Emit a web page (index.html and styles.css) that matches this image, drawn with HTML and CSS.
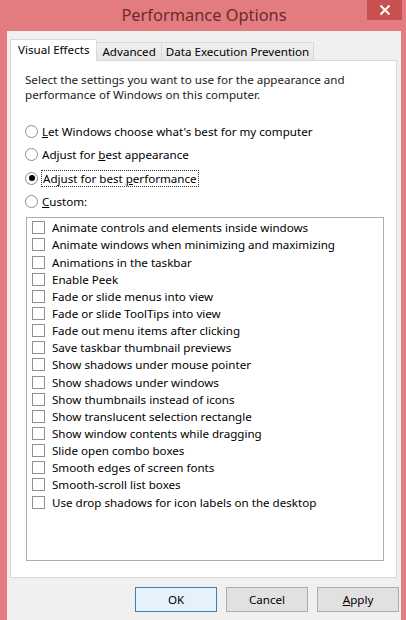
FILE: index.html
```html
<!DOCTYPE html>
<html>
<head>
<meta charset="utf-8">
<link rel="stylesheet" href="styles.css">
</head>
<body>
<div class="window">
  <div class="titlebar">
    <div></div>
    <div class="title">Performance Options</div>
    <div class="close-wrap"><div class="close"><svg width="12" height="12" viewBox="0 0 12 12"><path d="M1.5 1.5 L10.5 10.5 M10.5 1.5 L1.5 10.5" stroke="#fff" stroke-width="2" fill="none"/></svg></div></div>
  </div>
  <div class="client">
    <div class="tabs">
      <div class="tab active">Visual Effects</div>
      <div class="tab">Advanced</div>
      <div class="tab">Data Execution Prevention</div>
    </div>
    <div class="panel">
      <p class="desc">Select the settings you want to use for the appearance and performance of Windows on this computer.</p>
      <div class="radios">
        <div class="radio-row"><span class="radio"></span><span><u>L</u>et Windows choose what's best for my computer</span></div>
        <div class="radio-row"><span class="radio"></span><span>Adjust for <u>b</u>est appearance</span></div>
        <div class="radio-row"><span class="radio checked"></span><span class="focus">Adjust for best <u>p</u>erformance</span></div>
        <div class="radio-row"><span class="radio"></span><span><u>C</u>ustom:</span></div>
      </div>
      <div class="listbox">
        <div class="item"><span class="cb"></span>Animate controls and elements inside windows</div>
        <div class="item"><span class="cb"></span>Animate windows when minimizing and maximizing</div>
        <div class="item"><span class="cb"></span>Animations in the taskbar</div>
        <div class="item"><span class="cb"></span>Enable Peek</div>
        <div class="item"><span class="cb"></span>Fade or slide menus into view</div>
        <div class="item"><span class="cb"></span>Fade or slide ToolTips into view</div>
        <div class="item"><span class="cb"></span>Fade out menu items after clicking</div>
        <div class="item"><span class="cb"></span>Save taskbar thumbnail previews</div>
        <div class="item"><span class="cb"></span>Show shadows under mouse pointer</div>
        <div class="item"><span class="cb"></span>Show shadows under windows</div>
        <div class="item"><span class="cb"></span>Show thumbnails instead of icons</div>
        <div class="item"><span class="cb"></span>Show translucent selection rectangle</div>
        <div class="item"><span class="cb"></span>Show window contents while dragging</div>
        <div class="item"><span class="cb"></span>Slide open combo boxes</div>
        <div class="item"><span class="cb"></span>Smooth edges of screen fonts</div>
        <div class="item"><span class="cb"></span>Smooth-scroll list boxes</div>
        <div class="item"><span class="cb"></span>Use drop shadows for icon labels on the desktop</div>
      </div>
    </div>
    <div class="buttons">
      <div class="btn default">OK</div>
      <div class="btn">Cancel</div>
      <div class="btn"><u>A</u>pply</div>
    </div>
  </div>
</div>
</body>
</html>
```
FILE: styles.css
```css
html, body {
  margin: 0;
  padding: 0;
}
body {
  background: #e27c80;
  font-family: "Noto Sans", "Open Sans", sans-serif;
  font-size: 11.6px;
  color: #000;
}
.window {
  width: 406px;
  height: 620px;
  display: flex;
  flex-direction: column;
  background: #e27c80;
}
.titlebar {
  height: 31px;
  display: grid;
  grid-template-columns: 1fr auto 1fr;
  align-items: start;
}
.title {
  font-size: 16.4px;
  color: #6e2a2c;
  line-height: 29px;
  padding-left: 2px;
}
.close-wrap {
  display: flex;
  justify-content: flex-end;
  padding-right: 4px;
}
.close {
  width: 35px;
  height: 20px;
  background: #c8504f;
  display: flex;
  align-items: center;
  justify-content: center;
}
.client {
  flex: 1;
  margin: 0 5px 0 7px;
  background: #f0f0f0;
  padding: 8px 4px 0 3px;
  display: flex;
  flex-direction: column;
}
.tabs {
  display: flex;
  align-items: flex-end;
  height: 21px;
  position: relative;
  z-index: 1;
}
.tab {
  height: 18px;
  line-height: 17px;
  padding: 0 5px;
  border: 1px solid #d9d9d9;
  border-bottom: none;
  background: linear-gradient(#f0f0f0, #e5e5e5);
  margin-left: -1px;
  box-sizing: border-box;
}
.tab:first-child { margin-left: 0; }
.tab:last-child { padding: 0 4px; }
.tab.active {
  height: 22px;
  line-height: 20px;
  background: #fff;
  padding: 0 7px;
  margin-bottom: -1px;
}
.panel {
  width: 387px;
  height: 518px;
  box-sizing: border-box;
  background: #fff;
  border: 1px solid #d9d9d9;
  padding: 11px 14px 0 14px;
}
.desc {
  margin: 0;
  line-height: 15px;
  color: #1a1a1a;
  width: 345px;
}
.radios {
  margin-top: 18px;
  display: flex;
  flex-direction: column;
}
.radio-row {
  height: 23.3px;
  display: flex;
  align-items: center;
  gap: 4px;
}
.radio {
  width: 13px;
  height: 13px;
  border: 1px solid #8c8c8c;
  border-radius: 50%;
  background: #fff;
  box-sizing: border-box;
  display: flex;
  align-items: center;
  justify-content: center;
  flex: none;
}
.radio.checked::after {
  content: "";
  width: 6px;
  height: 6px;
  border-radius: 50%;
  background: #000;
}
.focus {
  outline: 1px dotted #333;
  outline-offset: 0;
  padding: 0 1px;
}
.listbox {
  margin-top: 4px;
  margin-left: 1px;
  width: 358px;
  height: 344px;
  box-sizing: border-box;
  border: 1px solid #abadb3;
  padding: 1px 0 0 5px;
}
.item {
  height: 17.15px;
  display: flex;
  align-items: center;
  gap: 7px;
  white-space: nowrap;
}
.cb {
  width: 13px;
  height: 13px;
  border: 1px solid #8f8f8f;
  box-sizing: border-box;
  background: #fff;
  flex: none;
}
.buttons {
  display: flex;
  justify-content: flex-end;
  gap: 9px;
  padding-top: 9px;
  margin-right: -2px;
}
.btn {
  width: 82px;
  height: 25px;
  box-sizing: border-box;
  border: 1px solid #adadad;
  background: #e1e1e1;
  display: flex;
  align-items: center;
  justify-content: center;
}
.btn.default {
  border-color: #3c7fb1;
  background: #e5f1fb;
  box-shadow: inset 0 0 0 1px #e5f1fb;
}
```
